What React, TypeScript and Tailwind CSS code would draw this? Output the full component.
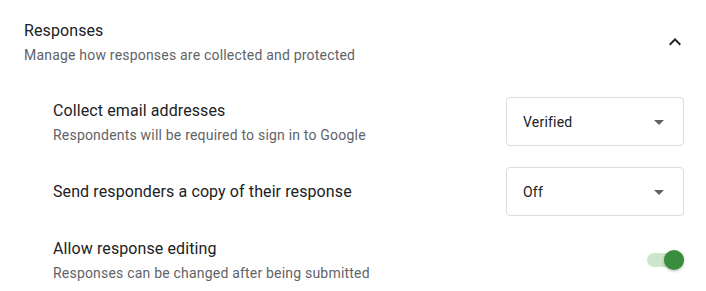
import { ReactNode } from 'react';

function Dropdown({ value }: { value: string }) {
  return (
    <div className="flex h-[49px] w-[178px] items-center justify-between rounded border border-[#dadce0] bg-white pl-4 pr-3">
      <span className="text-sm tracking-[0.2px] text-[#202124]">{value}</span>
      <svg width="24" height="24" viewBox="0 0 24 24" className="fill-[#5f6368]">
        <path d="M7 10l5 5 5-5z" />
      </svg>
    </div>
  );
}

function Toggle() {
  return (
    <div className="relative h-5 w-[37px]">
      <div className="absolute left-0 top-[3px] h-[14px] w-[34px] rounded-full bg-[#cde5cc]" />
      <div className="absolute right-0 top-0 h-5 w-5 rounded-full bg-[#388e3c] shadow-[0_1px_3px_rgba(0,0,0,0.3)]" />
    </div>
  );
}

function SettingRow({
  title,
  description,
  control,
  className = '',
}: {
  title: string;
  description?: string;
  control: ReactNode;
  className?: string;
}) {
  return (
    <div className={`flex h-[49px] items-center justify-between ${className}`}>
      <div>
        <div className="text-base leading-6 tracking-[0.1px] text-[#202124]">{title}</div>
        {description && (
          <div className="mt-[2px] text-sm leading-5 tracking-[0.2px] text-[#5f6368]">
            {description}
          </div>
        )}
      </div>
      {control}
    </div>
  );
}

export default function App() {
  return (
    <div className="min-h-screen w-full bg-white font-['Roboto',sans-serif]">
      <div className="flex items-center justify-between pl-6 pr-[19px] pt-[19px]">
        <div>
          <div className="text-base leading-6 tracking-[0.1px] text-[#202124]">Responses</div>
          <div className="mt-0.5 text-sm leading-5 tracking-[0.2px] text-[#5f6368]">
            Manage how responses are collected and protected
          </div>
        </div>
        <svg width="24" height="24" viewBox="0 0 24 24" className="fill-[#202124]">
          <path d="M12 8l-6 6 1.41 1.41L12 10.83l4.59 4.58L18 14z" />
        </svg>
      </div>

      <div className="mt-8 flex flex-col pl-[53px] pr-[22px]">
        <SettingRow
          title="Collect email addresses"
          description="Respondents will be required to sign in to Google"
          control={<Dropdown value="Verified" />}
        />
        <SettingRow
          className="mt-[21px]"
          title="Send responders a copy of their response"
          control={<Dropdown value="Off" />}
        />
        <SettingRow
          className="mt-[19px]"
          title="Allow response editing"
          description="Responses can be changed after being submitted"
          control={<Toggle />}
        />
      </div>
    </div>
  );
}
